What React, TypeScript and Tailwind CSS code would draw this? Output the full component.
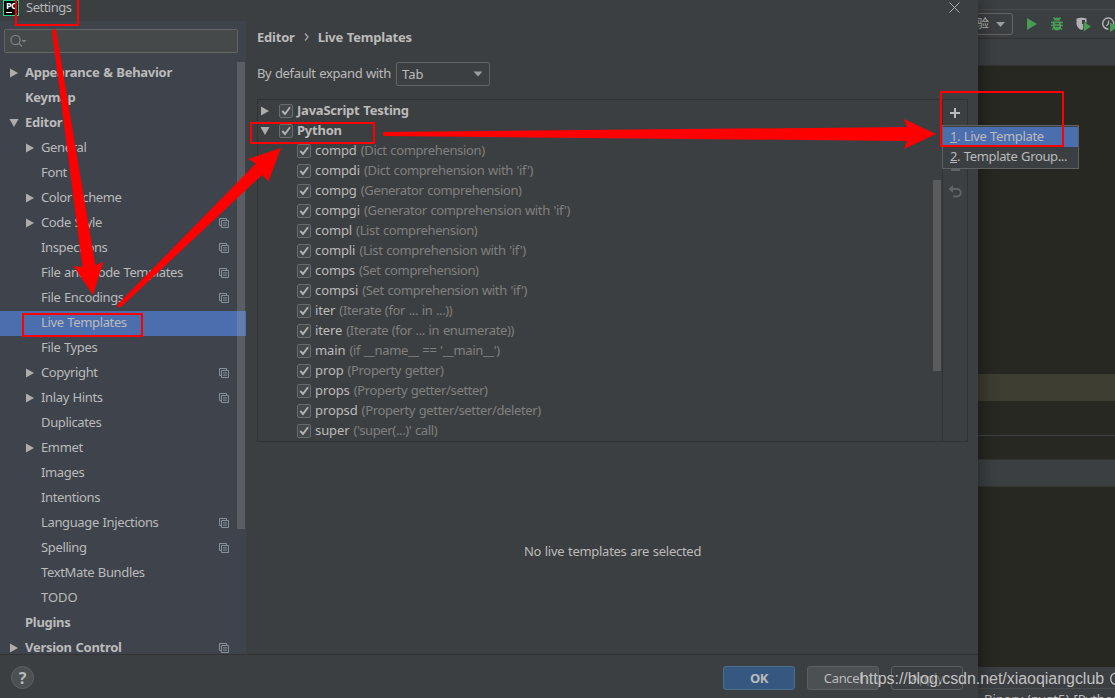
import React from "react"

type NavItem = {
    label: string
    level: number
    arrow?: "right" | "down"
    copy?: boolean
    selected?: boolean
}

const navItems: NavItem[] = [
    { label: "Appearance & Behavior", level: 0, arrow: "right" },
    { label: "Keymap", level: 0 },
    { label: "Editor", level: 0, arrow: "down" },
    { label: "General", level: 1, arrow: "right" },
    { label: "Font", level: 1 },
    { label: "Color Scheme", level: 1, arrow: "right" },
    { label: "Code Style", level: 1, arrow: "right", copy: true },
    { label: "Inspections", level: 1, copy: true },
    { label: "File and Code Templates", level: 1, copy: true },
    { label: "File Encodings", level: 1, copy: true },
    { label: "Live Templates", level: 1, selected: true },
    { label: "File Types", level: 1 },
    { label: "Copyright", level: 1, arrow: "right", copy: true },
    { label: "Inlay Hints", level: 1, arrow: "right", copy: true },
    { label: "Duplicates", level: 1 },
    { label: "Emmet", level: 1, arrow: "right" },
    { label: "Images", level: 1 },
    { label: "Intentions", level: 1 },
    { label: "Language Injections", level: 1, copy: true },
    { label: "Spelling", level: 1, copy: true },
    { label: "TextMate Bundles", level: 1 },
    { label: "TODO", level: 1 },
    { label: "Plugins", level: 0 },
    { label: "Version Control", level: 0, arrow: "right", copy: true },
]

const templates = [
    { name: "compd", desc: "(Dict comprehension)" },
    { name: "compdi", desc: "(Dict comprehension with 'if')" },
    { name: "compg", desc: "(Generator comprehension)" },
    { name: "compgi", desc: "(Generator comprehension with 'if')" },
    { name: "compl", desc: "(List comprehension)" },
    { name: "compli", desc: "(List comprehension with 'if')" },
    { name: "comps", desc: "(Set comprehension)" },
    { name: "compsi", desc: "(Set comprehension with 'if')" },
    { name: "iter", desc: "(Iterate (for ... in ...))" },
    { name: "itere", desc: "(Iterate (for ... in enumerate))" },
    { name: "main", desc: "(if __name__ == '__main__')" },
    { name: "prop", desc: "(Property getter)" },
    { name: "props", desc: "(Property getter/setter)" },
    { name: "propsd", desc: "(Property getter/setter/deleter)" },
    { name: "super", desc: "('super(...)' call)" },
]

const Arrow = ({ dir }: { dir?: "right" | "down" }) => (
    <svg width="10" height="10" viewBox="0 0 10 10" fill="#adadad" className="shrink-0">
        {dir === "right" && <path d="M1 0.5 L9 5 L1 9.5 Z" />}
        {dir === "down" && <path d="M0.5 1 H9.5 L5 9 Z" />}
    </svg>
)

const CopyIcon = () => (
    <svg width="10" height="10" viewBox="0 0 10 10" fill="none" stroke="#87919b" className="shrink-0">
        <path d="M2 7.5 H0.5 V0.5 H7.5 V2" />
        <path d="M2.5 2.5 H9.5 V9.5 H2.5 Z M4 4.9 H8 M4 7.1 H8" />
    </svg>
)

const Check = () => (
    <span className="flex h-[14px] w-[14px] shrink-0 items-center justify-center rounded-[2px] border border-[#6b6b6b] bg-[#43494a]">
        <svg width="12" height="12" viewBox="0 0 12 12" fill="none" stroke="#b4b4b4" strokeWidth="1.9">
            <path d="M2.3 6 L5 9 L10 2.2" />
        </svg>
    </span>
)

const Sidebar = () => (
    <div className="flex w-[246px] shrink-0 flex-col overflow-hidden bg-[#3e434c]">
        <div className="mt-2 ml-1 flex h-6 w-[234px] shrink-0 items-center rounded-[2px] border border-[#646464] bg-[#45494a] pl-[5px]">
            <svg width="17" height="14" viewBox="0 0 17 14" fill="none" stroke="#7c8387" strokeWidth="1.3">
                <circle cx="5.5" cy="6" r="4.6" />
                <path d="M9 9.5 L12 12.5" />
                <path d="M11.5 6 H16.5 L14 8.8 Z" fill="#7c8387" stroke="none" />
            </svg>
        </div>
        <div className="relative mt-2 min-h-0 flex-1 overflow-hidden">
            {navItems.map((item) => (
                <div
                    key={item.label}
                    className={`flex h-[25px] items-center pb-[2px] ${item.selected ? "bg-[#4b6eaf]" : ""} ${item.level ? "pl-[25px]" : "pl-[9px] font-bold tracking-[-0.28px]"}`}
                >
                    <Arrow dir={item.arrow} />
                    <span className={`-mt-[2px] ml-[6px] flex-1 whitespace-pre ${item.label === "TODO" ? "tracking-normal" : ""}`}>{item.label}</span>
                    {item.copy && <span className="mr-[17px] flex"><CopyIcon /></span>}
                </div>
            ))}
            <div className="absolute top-px right-px h-[467px] w-2 bg-[#a6a6a6]/27" />
        </div>
    </div>
)

const TemplateList = () => (
    <div className="mt-[13px] ml-[11px] flex h-[343px] w-[711px] border border-[#323232]">
        <div className="flex-1 overflow-hidden pt-px">
            <div className="flex h-5 items-center pl-[2px] font-bold tracking-[-0.22px]">
                <Arrow dir="right" />
                <span className="ml-[9px]"><Check /></span>
                <span className="-mt-[2px] ml-1">JavaScript Testing</span>
            </div>
            <div className="flex h-5 items-center pl-[2px] font-bold tracking-[-0.22px]">
                <Arrow dir="down" />
                <span className="ml-[9px]"><Check /></span>
                <span className="-mt-[2px] ml-1">Python</span>
            </div>
            {templates.map((t) => (
                <div key={t.name} className="flex h-5 items-center pl-[39px] whitespace-pre">
                    <Check />
                    <span className="-mt-[2px] ml-1 tracking-[-0.1px]">{t.name}</span>
                    <span className="-mt-[2px] ml-1 text-[#808080]">{t.desc}</span>
                </div>
            ))}
        </div>
        <div className="mt-[80px] mr-px h-[191px] w-2 bg-[#595b5d]" />
        <div className="flex w-[25px] flex-col items-center border-l border-[#323232] pt-2">
            <svg width="10" height="10" viewBox="0 0 10 10" stroke="#b9bbbd" strokeWidth="2">
                <path d="M5 0 V10 M0 5 H10" />
            </svg>
            <div className="mt-[51px] h-[2px] w-[9px] bg-[#616466]" />
            <svg width="14" height="13" viewBox="0 0 14 13" fill="none" stroke="#616466" strokeWidth="2" className="mt-[14px]">
                <path d="M3 4 H9 A3.7 3.7 0 0 1 9 11.5 H5" />
                <path d="M5 0 V8 L0.5 4 Z" fill="#616466" stroke="none" />
            </svg>
        </div>
    </div>
)

const Dialog = () => (
    <div className="relative z-10 flex w-[978px] shrink-0 flex-col bg-[#3c3f41] shadow-[2px_0_16px_rgba(0,0,0,0.4)]">
        <div className="flex h-[21px] shrink-0 justify-between">
            <div className="flex">
                <div className="ml-[3px] flex h-4 w-4 flex-col border border-[#21d789] bg-black pl-[2px]">
                    <span className="h-[9px] text-[9px] leading-[10px] font-bold tracking-[-0.5px] text-white">PC</span>
                    <span className="mt-[2px] h-px w-[6px] bg-white" />
                </div>
                <span className="ml-[7px] leading-[15px] tracking-[-0.5px] text-[#b4b6b8]">Settings</span>
            </div>
            <svg width="11" height="11" viewBox="0 0 11 11" stroke="#a9abad" className="mt-[2px] mr-[18px]">
                <path d="M0.5 0.5 L10.5 10.5 M10.5 0.5 L0.5 10.5" />
            </svg>
        </div>
        <div className="flex min-h-0 flex-1">
            <Sidebar />
            <div className="flex flex-1 flex-col">
                <div className="mt-[6px] ml-[11px] flex h-5 items-center font-bold tracking-[-0.22px]">
                    <span>Editor</span>
                    <svg width="5" height="8" viewBox="0 0 5 8" fill="none" stroke="#a9abad" strokeWidth="1.2" className="mx-[9px]">
                        <path d="M1 0.5 L4 4 L1 7.5" />
                    </svg>
                    <span>Live Templates</span>
                </div>
                <div className="mt-[15px] ml-[11px] flex h-6 items-center">
                    <span className="-mt-[2px] w-[139px] whitespace-pre">By default expand with</span>
                    <div className="flex h-6 w-[94px] items-center justify-between rounded-[2px] border border-[#646464] pr-[6px] pl-[5px]">
                        <span className="tracking-normal">Tab</span>
                        <svg width="10" height="6" viewBox="0 0 10 6" fill="#9b9d9f"><path d="M0.5 0.5 H9.5 L5 5.5 Z" /></svg>
                    </div>
                </div>
                <TemplateList />
                <div className="flex flex-1 items-center justify-center pt-[6px] pl-px">
                    <span className="tracking-[-0.28px]">No live templates are selected</span>
                </div>
            </div>
        </div>
        <div className="flex h-11 shrink-0 items-start border-t border-[#323232] pt-[11px]">
            <div className="ml-[11px] flex h-[23px] w-[23px] items-center justify-center rounded-full border border-[#5e6162] bg-[#4c5052] text-[16px] font-bold">?</div>
            <div className="ml-auto flex gap-3 pr-[15px]">
                <button className="h-6 w-[72px] rounded-[3px] border border-[#4c708c] bg-[#365880] font-bold">OK</button>
                <button className="h-6 w-[72px] rounded-[3px] border border-[#5e6060] bg-[#4c5052]">Cancel</button>
                <button className="h-6 w-[72px] rounded-[3px] border border-[#5e6060] text-[#777]">Apply</button>
            </div>
        </div>
    </div>
)

const Ide = () => (
    <div className="flex flex-1 flex-col overflow-hidden bg-[#272822]">
        <div className="h-[10px] shrink-0 border-b border-[#4a4c4e] bg-[#3c3f41]" />
        <div className="flex h-[29px] shrink-0 items-center border-b border-[#323232] bg-[#3c3f41]">
            <div className="flex h-[22px] w-[35px] shrink-0 items-center rounded-r-[3px] border border-l-0 border-[#646464]">
                <span className="-ml-px w-[12px] text-[12px]">验</span>
                <svg width="9" height="5" viewBox="0 0 9 5" fill="#9b9d9f" className="ml-[7px]"><path d="M0 0 H9 L4.5 5 Z" /></svg>
            </div>
            <svg width="10" height="12" viewBox="0 0 10 12" fill="#499c54" className="ml-[14px] shrink-0"><path d="M0 0 L10 6 L0 12 Z" /></svg>
            <svg width="14" height="14" viewBox="0 0 14 14" fill="#499c54" className="ml-[13px] shrink-0">
                <path d="M4 3.5 A3 3 0 0 1 10 3.5 Z" />
                <path d="M3 4.5 H11 V9.5 A4 4 0 0 1 3 9.5 Z" />
                <path d="M1 5.5 H13 M1 8.5 H13 M2 12.5 L4 10.5 M12 12.5 L10 10.5 M3.5 0.5 L5 2.5 M10.5 0.5 L9 2.5" stroke="#499c54" strokeWidth="1.4" />
                <path d="M5 6.7 H9 M5 9.3 H9" stroke="#3c3f41" />
            </svg>
            <svg width="16" height="15" viewBox="0 0 16 15" className="ml-[12px] shrink-0">
                <path d="M0.5 1.5 L5.5 0.5 L10.5 1.5 V7 Q10 11 5.5 13 Q1 11 0.5 7 Z" fill="#afb1b3" />
                <path d="M6 3 H9 V7 H6 Z" fill="#3c3f41" />
                <path d="M7.5 4.5 L15.5 9.5 L7.5 15 Z" fill="#499c54" stroke="#3c3f41" strokeWidth="0.7" />
            </svg>
            <svg width="16" height="15" viewBox="0 0 16 15" className="ml-[10px] shrink-0">
                <path d="M11.5 8 A5.5 5.5 0 1 0 6.5 12" fill="none" stroke="#afb1b3" strokeWidth="1.5" />
                <path d="M6.5 3.5 V6.5 L4.5 9" fill="none" stroke="#afb1b3" strokeWidth="1.3" />
                <path d="M8 5.5 L15.5 10 L8 15 Z" fill="#499c54" />
            </svg>
        </div>
        <div className="h-[27px] shrink-0 border-b border-[#323232] bg-[#3c3f41]" />
        <div className="mt-[308px] h-[27px] shrink-0 bg-[#3e3d32]" />
        <div className="mt-[34px] h-px shrink-0 bg-[#3f4042]" />
        <div className="mt-[23px] h-7 shrink-0 border-y border-[#323530] bg-[#3c3f41]" />
        <div className="mt-[180px] h-[22px] shrink-0 border-b border-[#4a4d4f] bg-[#3c3f41]" />
        <div className="h-[10px] shrink-0 overflow-hidden bg-[#3c3f41] pt-px pl-[6px] leading-[18px] tracking-normal whitespace-nowrap">Binary (pyqt5) [Python</div>
    </div>
)

const AddMenu = () => (
    <div className="absolute top-[125px] left-[942px] z-20 w-[137px] border border-[#616161] bg-[#3c3f41] pt-px">
        <div className="flex h-5 items-center bg-[#4b6eaf] pb-[2px] pl-[7px] whitespace-pre"><u>1</u>. Live Template</div>
        <div className="flex h-[21px] items-center pb-[3px] pl-[7px] whitespace-pre"><u>2</u>. Template Group...</div>
    </div>
)

const Annotations = () => (
    <svg width="1115" height="698" viewBox="0 0 1115 698" className="pointer-events-none absolute inset-0 z-30">
        <g fill="none" stroke="#ff0000" strokeWidth="2">
            <rect x="16" y="-1" width="62" height="26" />
            <rect x="23" y="314" width="119" height="22" />
            <rect x="251" y="123" width="123" height="20" />
            <rect x="941" y="92" width="122" height="54" />
        </g>
        <g fill="#ff0000">
            <path d="M52 31 Q53.500 28 56 30 L81 180 L95.500 265.500 L103.500 261.500 L93 295 L73.500 266 L82.500 267 L72 186 Z" />
            <path d="M117 305 Q118 308.500 121 307 L262 175 L268.500 181.500 L281 148 L248 159 L256 163.500 Z" />
            <path d="M384 132 Q382 134 384 136 L907 141 L904 149 L936 134 L904 119 L907 127 Z" />
        </g>
    </svg>
)

const App = () => {
    return (
        <div className="relative flex h-[698px] w-[1115px] overflow-hidden bg-[#3c3f41] font-['Noto_Sans','Noto_Sans_CJK_SC',sans-serif] text-[13px] leading-[18px] tracking-[-0.36px] [word-spacing:0.6px] text-[#bbbbbb]">
            <Dialog />
            <Ide />
            <AddMenu />
            <Annotations />
            <div className="absolute top-[668px] left-[860px] z-40 flex font-['Liberation_Sans',sans-serif] text-[16px] leading-[22px] tracking-[-0.04px] whitespace-nowrap text-[#d4d4d4]/90">
                <span className="w-[248px]">https://blog.csdn.net/xiaoqiangclub</span>
                <svg width="7" height="14" viewBox="0 0 7 14" fill="none" stroke="#c4c4c4" strokeWidth="1.3" className="mt-[4px]">
                    <path d="M7 1 A6 6 0 0 0 7 12.500" />
                </svg>
            </div>
        </div>
    )
}

export default App
